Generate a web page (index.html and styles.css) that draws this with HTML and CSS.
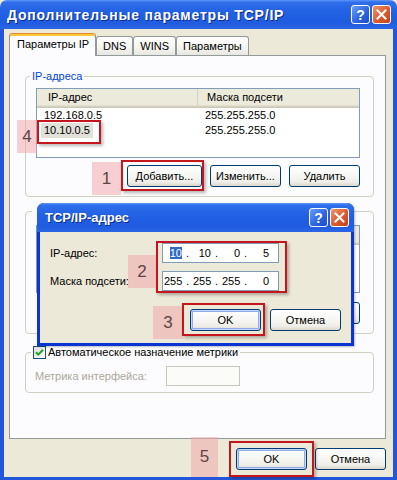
FILE: index.html
```html
<!DOCTYPE html>
<html lang="ru">
<head>
<meta charset="utf-8">
<title>Дополнительные параметры TCP/IP</title>
<link rel="stylesheet" href="styles.css">
</head>
<body>
<div class="window">
  <div class="titlebar">
    <span class="title">Дополнительные параметры TCP/IP</span>
    <div class="tb-buttons">
      <span class="tb-btn help">?</span>
      <span class="tb-btn close"><svg width="11" height="11" viewBox="0 0 11 11"><path d="M1.5 1.5 L9.5 9.5 M9.5 1.5 L1.5 9.5" stroke="#fff" stroke-width="2" stroke-linecap="square"/></svg></span>
    </div>
  </div>
  <div class="frame">
    <div class="client">
      <div class="tabs">
        <div class="tab active">Параметры IP</div>
        <div class="tab">DNS</div>
        <div class="tab">WINS</div>
        <div class="tab">Параметры</div>
      </div>
      <div class="panel">
        <div class="group g-ip">
          <div class="legend blue">IP-адреса</div>
          <div class="list list-ip">
            <div class="lv-head"><span class="c1">IP-адрес</span><span class="c2">Маска подсети</span></div>
            <div class="lv-row"><span class="c1"><span class="cell">192.168.0.5</span></span><span class="c2">255.255.255.0</span></div>
            <div class="lv-row"><span class="c1"><span class="cell sel">10.10.0.5</span></span><span class="c2">255.255.255.0</span></div>
          </div>
          <div class="btn-row">
            <button class="btn w75">Добавить...</button>
            <button class="btn w71">Изменить...</button>
            <button class="btn w71">Удалить</button>
          </div>
        </div>
        <div class="group g-gw">
          <div class="legend blank"></div>
          <div class="list list-gw">
            <div class="lv-head"><span class="c1"></span><span class="c2"></span></div>
          </div>
          <div class="btn-row">
            <button class="btn w75"></button>
            <button class="btn w71"></button>
            <button class="btn w71"></button>
          </div>
        </div>
        <div class="group g-metric">
          <div class="legend check-legend">
            <span class="checkbox"><svg width="11" height="11" viewBox="0 0 11 11"><path d="M2 5.2 L4.3 7.6 L9 2.8" fill="none" stroke="#21a121" stroke-width="2"/></svg></span>
            <span>Автоматическое назначение метрики</span>
          </div>
          <div class="metric-row">
            <span class="disabled-label">Метрика интерфейса:</span>
            <span class="input disabled-input"></span>
          </div>
        </div>
      </div>
      <div class="footer">
        <button class="btn w71 default">OK</button>
        <button class="btn w71">Отмена</button>
      </div>
    </div>
  </div>

  <div class="dlg">
    <div class="dlg-title">
      <span class="title small">TCP/IP-адрес</span>
      <div class="tb-buttons">
        <span class="tb-btn help">?</span>
        <span class="tb-btn close"><svg width="11" height="11" viewBox="0 0 11 11"><path d="M1.5 1.5 L9.5 9.5 M9.5 1.5 L1.5 9.5" stroke="#fff" stroke-width="2" stroke-linecap="square"/></svg></span>
      </div>
    </div>
    <div class="dlg-body">
      <div class="field-row">
        <span class="field-label">IP-адрес:</span>
        <span class="ipbox"><span class="oct"><span class="hl">10</span></span><span class="dot">.</span><span class="oct">10</span><span class="dot">.</span><span class="oct">0</span><span class="dot">.</span><span class="oct">5</span></span>
      </div>
      <div class="field-row">
        <span class="field-label">Маска подсети:</span>
        <span class="ipbox"><span class="oct">255</span><span class="dot">.</span><span class="oct">255</span><span class="dot">.</span><span class="oct">255</span><span class="dot">.</span><span class="oct">0</span></span>
      </div>
      <div class="dlg-buttons">
        <button class="btn w71 default">OK</button>
        <button class="btn w71">Отмена</button>
      </div>
    </div>
  </div>

  <div class="num n4">4</div>
  <div class="mark m4"></div>
  <div class="num n1">1</div>
  <div class="mark m1"></div>
  <div class="num n2">2</div>
  <div class="mark m2"></div>
  <div class="num n3">3</div>
  <div class="mark m3"></div>
  <div class="num n5">5</div>
  <div class="mark m5"></div>
</div>
</body>
</html>
```
FILE: styles.css
```css
* { box-sizing: border-box; }
html, body { margin: 0; padding: 0; }
body {
  width: 397px;
  height: 480px;
  overflow: hidden;
  background: #ece9d8;
  font-family: "Liberation Sans", Arial, sans-serif;
  font-size: 11px;
  color: #000;
}
.window {
  position: relative;
  width: 397px;
  height: 480px;
  display: flex;
  flex-direction: column;
}
.titlebar {
  height: 29px;
  flex: none;
  display: flex;
  align-items: center;
  justify-content: space-between;
  padding: 0 6px 0 7px;
  border-radius: 7px 7px 0 0;
  background: linear-gradient(#5a96f8 0%, #2f6fea 8%, #2262e4 40%, #1f5ce0 80%, #2a66e4 100%);
}
.title {
  color: #fff;
  font-weight: bold;
  font-size: 14px;
  letter-spacing: 0.8px;
  text-shadow: 1px 1px 0 #0c2a8f;
  white-space: nowrap;
}
.tb-buttons { display: flex; gap: 2px; }
.tb-btn {
  width: 19px;
  height: 19px;
  border: 1px solid #fff;
  border-radius: 3px;
  display: flex;
  align-items: center;
  justify-content: center;
  color: #fff;
  font-weight: bold;
  font-size: 14px;
  letter-spacing: 0;
  font-family: "Liberation Sans", Arial, sans-serif;
}
.tb-btn.help { background: linear-gradient(135deg, #6a9ef8, #2a62e0 60%, #1b4fcf); }
.tb-btn.close { background: linear-gradient(135deg, #f0956f, #db5a2f 55%, #c3401b); }

.frame {
  flex: 1;
  background: #2456dc;
  padding: 0 4px 3px 4px;
  display: flex;
}
.client {
  flex: 1;
  background: #ece9d8;
  padding: 4px 7px 0 5px;
  display: flex;
  flex-direction: column;
}
.tabs {
  height: 23px;
  display: flex;
  align-items: flex-end;
  margin-bottom: -1px;
  position: relative;
  z-index: 1;
}
.tab {
  height: 19px;
  margin-bottom: 1px;
  padding: 0 6px;
  line-height: 18px;
  border: 1px solid #919b9c;
  border-bottom: none;
  border-radius: 3px 3px 0 0;
  background: linear-gradient(#ffffff, #f4f4f0 60%, #e8e7df);
  white-space: nowrap;
}
.tab.active {
  height: 23px;
  margin-bottom: 0;
  padding: 0 6px 0 7px;
  line-height: 21px;
  background: #fcfcfe;
  border-top: 1px solid #e68b2c;
  box-shadow: inset 0 2px 0 #ffc83c;
}
.panel {
  height: 384px;
  flex: none;
  border: 1px solid #919b9c;
  background: #fcfcfe;
  padding: 20px 11px 0 15px;
}
.group {
  border: 1px solid #d0d0bf;
  border-radius: 4px;
  padding: 0 13px 9px 10px;
}
.legend {
  margin-top: -7px;
  margin-left: -6px;
  padding: 0 2px;
  width: max-content;
  line-height: 13px;
  height: 13px;
  background: #fcfcfe;
}
.legend.blue { color: #0046d5; }
.legend.blank { width: 12px; margin-left: -4px; }
.list {
  border: 1px solid #7f9db9;
  background: #fff;
}
.list-ip { margin-top: 5px; height: 70px; }
.list-gw { margin-top: 7px; height: 68px; }
.lv-head {
  display: flex;
  height: 19px;
  line-height: 17px;
  background: #ebeadb;
  box-shadow: inset 0 -1px 0 #cbc7b8, inset 0 -2px 0 #d6d2c2, inset 0 -3px 0 #e2decd;
}
.lv-head .c1 { width: 161px; padding-left: 11px; border-right: 1px solid #d6d2c2; }
.lv-head .c2 { flex: 1; padding-left: 9px; }
.lv-row { display: flex; height: 15px; line-height: 15px; }
.lv-row .c1 { width: 161px; padding-left: 4px; }
.lv-row .c2 { flex: 1; padding-left: 7px; }
.cell { padding: 0 3px; display: inline-block; }
.cell.sel { background: #e1e0d9; }

.btn-row {
  display: flex;
  justify-content: flex-end;
  gap: 8px;
}
.g-ip .btn-row { margin-top: 7px; }
.g-gw { margin-top: 14px; }
.g-gw .btn-row { margin-top: 9px; }

.btn {
  height: 22px;
  padding: 0;
  border: 1px solid #003c74;
  border-radius: 3px;
  background: linear-gradient(#ffffff 0%, #f7f7f4 45%, #efeee9 80%, #dcd7cd 100%);
  font-family: "Liberation Sans", Arial, sans-serif;
  font-size: 11px;
  color: #000;
  text-align: center;
}
.btn.w75 { width: 75px; }
.btn.w71 { width: 71px; }
.btn.default {
  box-shadow: inset 0 0 0 1px #c4d7fa, inset 0 0 0 2px #8fabea;
}

.g-metric { margin-top: 18px; padding-bottom: 6px; }
.check-legend {
  display: flex;
  align-items: center;
  gap: 2px;
  margin-left: -5px;
  color: #000;
}
.checkbox {
  width: 13px;
  height: 13px;
  border: 1px solid #1c5180;
  background: linear-gradient(135deg, #dcdcd7, #fff);
  display: flex;
  align-items: center;
  justify-content: center;
}
.metric-row {
  margin-top: 7px;
  display: flex;
  align-items: center;
  height: 20px;
}
.disabled-label {
  width: 131px;
  margin-left: -1px;
  color: #aca899;
}
.input {
  width: 74px;
  height: 20px;
  border: 1px solid #c9c7ba;
  background: #fbfbf9;
}

.footer {
  display: flex;
  justify-content: flex-end;
  gap: 8px;
  padding-top: 9px;
}

/* overlay dialog */
.dlg {
  position: absolute;
  left: 37px;
  top: 203px;
  width: 317px;
  height: 143px;
  background: #0a35d2;
  border-radius: 7px 7px 0 0;
  display: flex;
  flex-direction: column;
  box-shadow: 1px 1px 2px rgba(0,0,0,0.25);
}
.dlg-title {
  height: 29px;
  flex: none;
  display: flex;
  align-items: center;
  justify-content: space-between;
  padding: 0 5px 0 8px;
  border-radius: 7px 7px 0 0;
  background: linear-gradient(#5a96f8 0%, #2f6fea 8%, #2262e4 40%, #1f5ce0 80%, #2a66e4 100%);
}
.title.small { font-size: 13px; letter-spacing: 0; }
.dlg-body {
  flex: 1;
  margin: 0 3px 3px 3px;
  background: #ece9d8;
  padding: 11px 10px 0 10px;
  display: flex;
  flex-direction: column;
  gap: 8px;
}
.field-row { display: flex; align-items: center; height: 20px; }
.field-label { width: 112px; }
.ipbox {
  width: 117px;
  height: 20px;
  border: 1px solid #7f9db9;
  background: #fff;
  display: flex;
  align-items: center;
  padding-left: 1px;
}
.oct { width: 18px; text-align: right; }
.dot { width: 11px; text-align: center; }
.hl { background: #316ac5; color: #fff; }
.dlg-buttons {
  margin-top: 10px;
  display: flex;
  justify-content: flex-end;
  gap: 9px;
}

/* annotations */
.num {
  position: absolute;
  background: rgba(243, 168, 172, 0.55);
  color: #5b4646;
  font-family: "Liberation Sans", Arial, sans-serif;
  font-size: 17px;
  display: flex;
  align-items: center;
  justify-content: center;
}
.mark {
  position: absolute;
  border: 2px solid #c4161c;
  box-shadow: 2px 2px 3px rgba(0,0,0,0.28);
}
.n4 { left: 17px; top: 120px; width: 20px; height: 33px; }
.m4 { left: 37px; top: 120px; width: 64px; height: 24px; }
.n1 { left: 92px; top: 162px; width: 29px; height: 33px; }
.m1 { left: 121px; top: 160px; width: 83px; height: 31px; }
.n2 { left: 128px; top: 255px; width: 28px; height: 33px; }
.m2 { left: 156px; top: 241px; width: 131px; height: 52px; }
.n3 { left: 153px; top: 306px; width: 30px; height: 33px; }
.m3 { left: 182px; top: 303px; width: 83px; height: 33px; }
.n5 { left: 191px; top: 437px; width: 27px; height: 40px; }
.m5 { left: 229px; top: 441px; width: 85px; height: 36px; }
```
